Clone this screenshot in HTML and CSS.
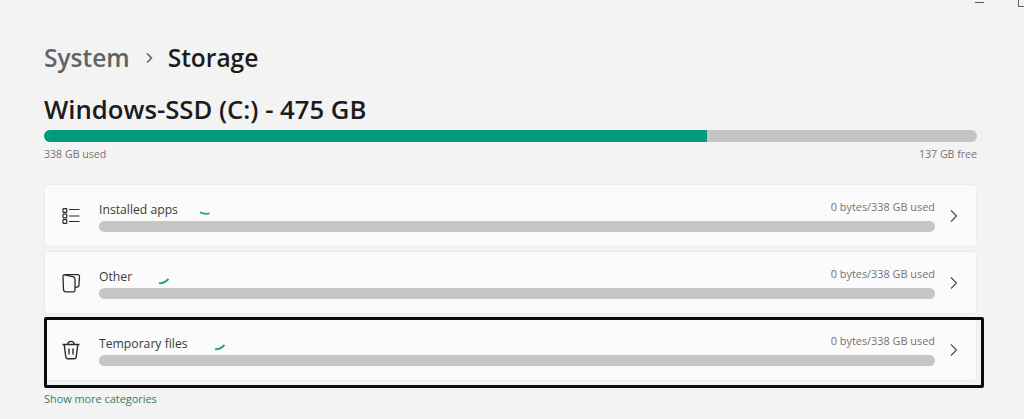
FILE: index.html
```html
<!DOCTYPE html>
<html lang="en">
<head>
    <meta charset="UTF-8">
    <meta name="viewport" content="width=device-width, initial-scale=1.0">
    <title>Storage</title>
    <link rel="stylesheet" href="styles.css">
</head>
<body>
    <div class="window-controls">
        <span class="minimize"></span>
        <span class="maximize"></span>
    </div>
    <div class="page">
        <h1 class="breadcrumb">
            <span class="parent">System</span>
            <svg class="crumb-arrow" width="9" height="12" viewBox="0 0 9 12"><path d="M2 1.5 L6.5 6 L2 10.5" fill="none" stroke="#5c5c5c" stroke-width="1.5"/></svg>
            <span>Storage</span>
        </h1>
        <h2 class="drive">Windows-SSD (C:) - 475 GB</h2>
        <div class="drive-bar"><div class="drive-fill"></div></div>
        <div class="drive-stats">
            <span>338 GB used</span>
            <span>137 GB free</span>
        </div>

        <div class="categories">
            <div class="card">
                <svg class="card-icon" width="20" height="20" viewBox="0 0 20 20" fill="none" stroke="#2b2b2b" stroke-width="1.2">
                    <rect x="2" y="2.6" width="3.8" height="3.8" rx="0.6"/>
                    <rect x="2" y="8.1" width="3.8" height="3.8" rx="0.6"/>
                    <rect x="2" y="13.6" width="3.8" height="3.8" rx="0.6"/>
                    <path d="M8 3.5H18.5M8 10H18.5M8 15.5H18.5"/>
                </svg>
                <div class="card-body">
                    <div class="card-head">
                        <span class="card-name">Installed apps<svg class="spinner" width="12" height="5" viewBox="0 0 12 5"><path d="M1 1.2 Q5.5 3.6 10.5 2.4" fill="none" stroke="#1aa58c" stroke-width="1.8"/></svg></span>
                        <span class="card-used">0 bytes/338 GB used</span>
                    </div>
                    <div class="card-bar"></div>
                </div>
                <svg class="chevron" width="10" height="14" viewBox="0 0 10 14"><path d="M2 1.5 L7.5 7 L2 12.5" fill="none" stroke="#4a4a4a" stroke-width="1.1"/></svg>
            </div>

            <div class="card">
                <svg class="card-icon" width="20" height="20" viewBox="0 0 20 20" fill="none" stroke="#2b2b2b" stroke-width="1.3">
                    <path d="M2 3.5 Q2 1.6 4 1.6 H16.5 Q18.6 1.6 18.5 3.8 L17.9 12.5 Q17.6 14 15.8 14.2 L14 14.4"/>
                    <path d="M2 3.5 L2.5 16.5 Q2.6 18.8 5 18.8 H12.5 Q14 18.8 14 17 V6 Q14 4.4 12.5 3.9 L3.6 1.8"/>
                </svg>
                <div class="card-body">
                    <div class="card-head">
                        <span class="card-name">Other<svg class="spinner spinner-other" width="12" height="7" viewBox="0 0 12 7"><path d="M1 5.2 Q6 5.6 10.5 1" fill="none" stroke="#1aa58c" stroke-width="1.8"/></svg></span>
                        <span class="card-used">0 bytes/338 GB used</span>
                    </div>
                    <div class="card-bar"></div>
                </div>
                <svg class="chevron" width="10" height="14" viewBox="0 0 10 14"><path d="M2 1.5 L7.5 7 L2 12.5" fill="none" stroke="#4a4a4a" stroke-width="1.1"/></svg>
            </div>

            <div class="card card-marked">
                <svg class="card-icon" width="20" height="20" viewBox="0 0 20 20" fill="none" stroke="#2b2b2b" stroke-width="1.4">
                    <path d="M1.5 4.5H18.5M6.8 4.5 Q6.8 1.4 10 1.4 Q13.2 1.4 13.2 4.5"/>
                    <path d="M3.2 4.5 L4.8 16.8 Q5 18.8 7 18.8 H13 Q15 18.8 15.2 16.8 L16.8 4.5"/>
                    <path d="M8 8.5V14.5M12 8.5V14.5"/>
                </svg>
                <div class="card-body">
                    <div class="card-head">
                        <span class="card-name">Temporary files<svg class="spinner spinner-temp" width="12" height="7" viewBox="0 0 12 7"><path d="M1 5.2 Q6 5.6 10.5 1" fill="none" stroke="#1aa58c" stroke-width="1.8"/></svg></span>
                        <span class="card-used">0 bytes/338 GB used</span>
                    </div>
                    <div class="card-bar"></div>
                </div>
                <svg class="chevron" width="10" height="14" viewBox="0 0 10 14"><path d="M2 1.5 L7.5 7 L2 12.5" fill="none" stroke="#4a4a4a" stroke-width="1.1"/></svg>
                <div class="marker"></div>
            </div>
        </div>

        <a class="show-more" href="#">Show more categories</a>
    </div>
</body>
</html>
```

FILE: styles.css
```css
* {
    box-sizing: border-box;
}
html, body {
    height: 100%;
}
body {
    margin: 0;
    background-color: #f3f3f3;
    font-family: "Open Sans", "Noto Sans", sans-serif;
    color: #1c1c1c;
    overflow: hidden;
    position: relative;
}
.window-controls .minimize {
    position: absolute;
    top: 2px;
    left: 975px;
    width: 9px;
    height: 1px;
    background-color: #555;
}
.window-controls .maximize {
    position: absolute;
    top: 0;
    left: 1018px;
    width: 7px;
    height: 7px;
    border: 1px solid #666;
    border-top: none;
}
.page {
    padding: 40px 47px 0 44px;
}
.breadcrumb {
    display: flex;
    align-items: center;
    margin: 0;
    font-size: 24.5px;
    font-weight: 600;
    line-height: 36px;
    height: 36px;
}
.breadcrumb .parent {
    color: #636363;
}
.crumb-arrow {
    margin: 0 14px 0 15px;
}
.drive {
    margin: 18px 0 0;
    font-size: 25.7px;
    font-weight: 600;
    line-height: 32px;
    height: 32px;
}
.drive-bar {
    margin-top: 4px;
    height: 12px;
    border-radius: 6px;
    background-color: #c4c4c4;
    overflow: hidden;
}
.drive-fill {
    width: 663px;
    height: 100%;
    background-color: #009b7d;
}
.drive-stats {
    display: flex;
    justify-content: space-between;
    margin-top: 4px;
    font-size: 10.6px;
    line-height: 16px;
    color: #737373;
}
.categories {
    display: flex;
    flex-direction: column;
    gap: 4px;
    margin-top: 22px;
}
.card {
    position: relative;
    display: flex;
    align-items: center;
    height: 63px;
    padding-left: 16px;
    background-color: #fbfbfb;
    border: 1px solid #ececec;
    border-radius: 4px;
}
.card-icon {
    flex: none;
}
.card-body {
    flex: 1;
    margin-left: 18px;
}
.card-head {
    display: flex;
    justify-content: space-between;
    align-items: center;
    height: 20px;
}
.card-name {
    font-size: 12.2px;
    color: #3a3a3a;
}
.spinner {
    margin-left: 21px;
    vertical-align: -2px;
}
.spinner-other {
    margin-left: 26px;
    vertical-align: -4px;
}
.spinner-temp {
    margin-left: 26px;
    vertical-align: -3px;
}
.card-used {
    margin-bottom: 6px;
    font-size: 10.9px;
    color: #737373;
}
.card-bar {
    margin-top: 1px;
    height: 11px;
    border-radius: 6px;
    background-color: #c6c6c6;
}
.chevron {
    flex: none;
    margin: 0 17px 0 14px;
}
.marker {
    position: absolute;
    top: -2px;
    left: -1px;
    width: 940px;
    height: 71px;
    border: 3px solid #0c0c0c;
    border-radius: 2px;
    pointer-events: none;
}
.show-more {
    display: block;
    margin-top: 10px;
    font-size: 10.9px;
    line-height: 16px;
    color: #2f7d63;
    text-decoration: none;
}
```
